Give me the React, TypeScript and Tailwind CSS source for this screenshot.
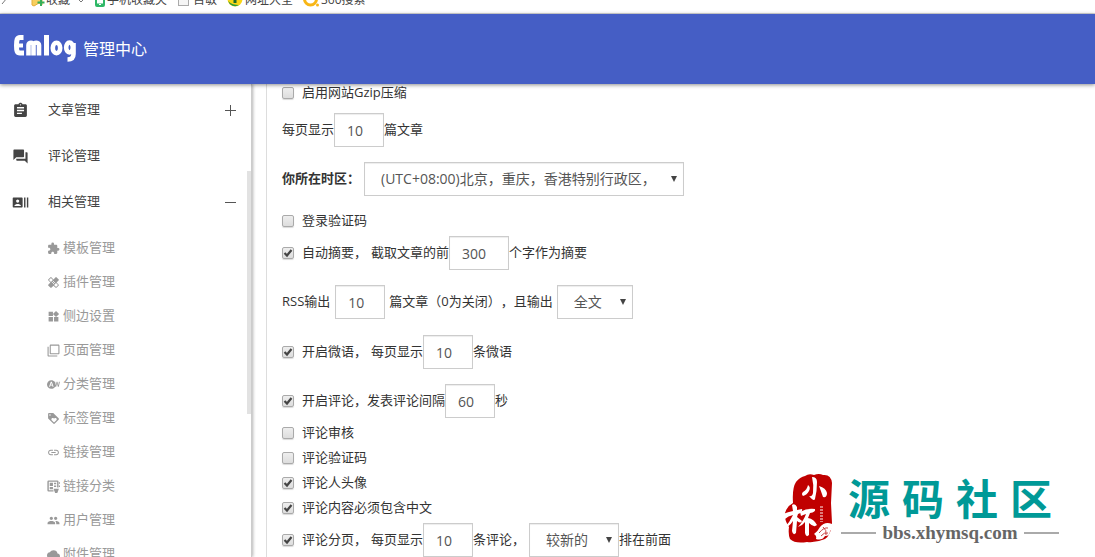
import { FC, ReactNode } from "react";
import { IconType } from "react-icons";
import {
    MdAssignment,
    MdCloud,
    MdExtension,
    MdFilterNone,
    MdHealing,
    MdLink,
    MdPeople,
    MdQuestionAnswer,
    MdRecentActors,
    MdWidgets,
} from "react-icons/md";

type IconProps = { className?: string };
type MenuItem = { label: string; icon: IconType | FC<IconProps>; sign?: "plus" | "minus" };

const LoyaltyIcon: FC<IconProps> = ({ className }) => (
    <svg viewBox="0 0 24 24" className={className} fill="currentColor" aria-hidden="true">
        <path d="M21.41 11.58l-9-9C12.05 2.22 11.55 2 11 2H4c-1.1 0-2 .9-2 2v7c0 .55.22 1.05.59 1.42l9 9c.36.36.86.58 1.41.58.55 0 1.05-.22 1.41-.59l7-7c.37-.36.59-.86.59-1.41 0-.55-.23-1.06-.59-1.42zM5.5 7C4.67 7 4 6.33 4 5.5S4.67 4 5.5 4 7 4.67 7 5.5 6.33 7 5.5 7zm11.77 8.27L13 19.54l-4.27-4.27C8.28 14.81 8 14.19 8 13.5c0-1.38 1.12-2.5 2.5-2.5.69 0 1.32.28 1.77.74l.73.72.73-.73c.45-.45 1.08-.73 1.77-.73 1.38 0 2.5 1.12 2.5 2.5 0 .69-.28 1.32-.73 1.77z" />
    </svg>
);

const AutoIcon: FC<IconProps> = ({ className }) => (
    <svg viewBox="0 0 24 24" className={className} fill="currentColor" aria-hidden="true">
        <path d="M6.85 12.65h2.3L8 9l-1.15 3.65zM22 7l-1.2 6.29L19.3 7h-1.6l-1.49 6.29L15 7h-.76C12.77 5.17 10.53 4 8 4c-4.42 0-8 3.58-8 8s3.58 8 8 8c3.13 0 5.84-1.81 7.15-4.43l.1.43H17l1.5-6.1L20 16h1.75l2.05-9H22zm-11.7 9l-.7-2H6.4l-.7 2H3.8L7 7h2l3.2 9h-1.9z" />
    </svg>
);

const BoardIcon: FC<IconProps> = ({ className }) => (
    <svg viewBox="0 0 12 12" className={className} aria-hidden="true">
        <path d="M10 7V1.500Q10 1 9.500 1H1.500Q1 1 1 1.500v8Q1 10 1.500 10H6" fill="none" stroke="currentColor" strokeWidth="1.300" />
        <path d="M2.500 2.500h3v3h-3zM6.500 2.500h2v1.500h-2zM6.500 5h2v1.500h-2zM2.500 6.500h3v2h-3zM6 8h5l-1.500 4h-2zM11 2h1v1.500h-1zM11 5h1v1.500h-1z" fill="currentColor" />
    </svg>
);

const menu: MenuItem[] = [
    { label: "文章管理", icon: MdAssignment, sign: "plus" },
    { label: "评论管理", icon: MdQuestionAnswer },
    { label: "相关管理", icon: MdRecentActors, sign: "minus" },
];

const subMenu: MenuItem[] = [
    { label: "模板管理", icon: MdExtension },
    { label: "插件管理", icon: MdHealing },
    { label: "侧边设置", icon: MdWidgets },
    { label: "页面管理", icon: MdFilterNone },
    { label: "分类管理", icon: AutoIcon },
    { label: "标签管理", icon: LoyaltyIcon },
    { label: "链接管理", icon: MdLink },
    { label: "链接分类", icon: BoardIcon },
    { label: "用户管理", icon: MdPeople },
    { label: "附件管理", icon: MdCloud },
];

const App: FC = () => (
    <div className="h-screen overflow-hidden flex flex-col bg-white text-[13px] text-[#333] [text-spacing-trim:space-all] font-['Open_Sans','Noto_Sans_CJK_SC',sans-serif]">
        <BookmarkBar />
        <Header />
        <div className="flex flex-1 min-h-0">
            <Sidebar />
            <Settings />
        </div>
        <SiteMark />
    </div>
);

const BookmarkBar: FC = () => (
    <nav className="h-[14px] shrink-0 overflow-hidden flex items-start border-b border-[#d8d8d8] text-[12px] text-[#444]">
        <div className="flex items-center h-4 -mt-2 whitespace-nowrap">
            <svg viewBox="0 0 30 16" className="w-[30px] h-4 mr-[1px]" aria-hidden="true">
                <path d="M2 12 L7 6" stroke="#777" fill="none" />
            </svg>
            <a href="#fav" className="flex items-center w-[64px]">
                <svg viewBox="0 0 14 14" className="w-[14px] h-[14px] mr-[1px]" aria-hidden="true">
                    <path d="M1 1h10v11l-3-2-5 3-2-1z" fill="#f7cf5e" stroke="#e5ae38" />
                    <path d="M10 6v7M6.500 9.500h7" stroke="#35ae58" strokeWidth="2" />
                </svg>
                收藏
                <svg viewBox="0 0 8 8" className="w-2 h-2 ml-[7px]" aria-hidden="true">
                    <path d="M1 3l3 3 3-3" fill="none" stroke="#777" />
                </svg>
            </a>
            <a href="#mobile" className="flex items-center w-[83px]">
                <svg viewBox="0 0 10 14" className="w-[10px] h-[14px] mr-[2px]" aria-hidden="true">
                    <rect x="1" y="1" width="8" height="12" rx="1" fill="#fff" stroke="#2fb867" strokeWidth="2" />
                    <path d="M1 11.500h8" stroke="#2fb867" strokeWidth="2" />
                    <path d="M4 11.500h2" stroke="#fff" />
                </svg>
                手机收藏夹
            </a>
            <a href="#baimin" className="flex items-center w-[49px]">
                <svg viewBox="0 0 12 14" className="w-3 h-[14px] mr-[3px]" aria-hidden="true">
                    <rect x=".5" y=".5" width="10" height="12" fill="#f5f5f5" stroke="#aaa" />
                </svg>
                百敏
            </a>
            <a href="#sites" className="flex items-center w-[76px]">
                <svg viewBox="0 0 16 16" className="w-4 h-4 mr-[2px]" aria-hidden="true">
                    <circle cx="8" cy="7" r="7.500" fill="#f9d616" />
                    <path d="M1 9a7.500 7.500 0 0 0 11 4c-4 0-8-1-11-4z" fill="#27983f" />
                    <path d="M8 5v6" stroke="#1d6b2b" strokeWidth="3" />
                </svg>
                网址大全
            </a>
            <a href="#search" className="flex items-center">
                <svg viewBox="0 0 16 16" className="w-4 h-4 mr-[2px]" aria-hidden="true">
                    <circle cx="7.500" cy="7" r="6" fill="none" stroke="#f8b616" strokeWidth="3" />
                    <circle cx="14.500" cy="13" r="1.500" fill="#f8b616" />
                </svg>
                360搜索
            </a>
        </div>
    </nav>
);

const Header: FC = () => (
    <header className="h-[70px] shrink-0 relative z-10 flex items-center px-3 bg-[#455ec5] text-white shadow-[0_1px_4px_rgba(0,0,0,0.45)]">
        <a href="#home" className="flex items-center">
            <svg viewBox="0 0 64 28" className="w-16 h-7 mr-[7px]" role="img" aria-label="Emlog">
                <g fill="none" stroke="#fff">
                    <path d="M11.500 2.500H8C5 2.500 4.500 5 4.500 10.500S5 18 8 18h4" strokeWidth="5" />
                    <path d="M5 10.500h6" strokeWidth="4" />
                    <path d="M16.500 20.500V10c0-3 5-3 5 0v10.500M21.500 20.500V10c0-3 5.500-3 5.500 0v10.500" strokeWidth="4.600" />
                    <path d="M34.500 0v20.500" strokeWidth="5" />
                    <ellipse cx="44.500" cy="13" rx="3.700" ry="5.200" strokeWidth="4.600" />
                    <ellipse cx="57.500" cy="12.500" rx="3.300" ry="5" strokeWidth="4.600" />
                    <path d="M61.500 8v11c0 4-2 5.500-6 5.500" strokeWidth="4.600" />
                </g>
            </svg>
            <span className="text-base">管理中心</span>
        </a>
    </header>
);

const Sidebar: FC = () => (
    <aside className="w-[252px] shrink-0 relative overflow-hidden border-r border-[#ccc] shadow-[1px_0_3px_rgba(0,0,0,0.3)] pt-[3px]">
        {menu.map(({ label, icon: Icon, sign }) => (
            <a key={label} href={`#${label}`} className="h-[46px] flex items-center pl-3 pr-[15px] text-[#444]">
                <Icon className="size-[17px] mr-[19px]" />
                <span className="flex-1">{label}</span>
                {sign && <Sign type={sign} />}
            </a>
        ))}
        <div className="pt-[6px]">
            {subMenu.map(({ label, icon: Icon }) => (
                <a key={label} href={`#${label}`} className="h-[34px] flex items-center pl-[47px] text-[#999]">
                    <Icon className="size-[13px] mr-[3px]" />
                    {label}
                </a>
            ))}
        </div>
        <div className="absolute right-0 top-[87px] w-1 h-[243px] bg-[#e2e2e2]" />
    </aside>
);

const Sign: FC<{ type: "plus" | "minus" }> = ({ type }) => (
    <svg viewBox="0 0 11 11" className="size-[11px]" aria-hidden="true">
        <path d={type === "plus" ? "M0 5.500h11M5.500 0v11" : "M0 5.500h11"} stroke="#555" />
    </svg>
);

const Settings: FC = () => (
    <form className="flex-1 min-w-0 ml-[14px] pl-[15px] border-l border-[#ddd] overflow-hidden whitespace-nowrap">
        <div className="h-[17px] mb-3 flex items-center">
            <Check label="启用网站Gzip压缩" />
        </div>
        <Row>
            每页显示<Field label="每页显示文章数" value="10" />篇文章
        </Row>
        <Row>
            <label htmlFor="timezone" className="font-bold mr-1">你所在时区：</label>
            <Select id="timezone" label="你所在时区" className="w-[320px]" option="(UTC+08:00)北京，重庆，香港特别行政区，乌鲁木齐" />
        </Row>
        <div className="h-[25px] -mt-[3px] mb-[3px] flex items-center">
            <Check label="登录验证码" />
        </div>
        <Row>
            <Check label="自动摘要，" checked />
            <span className="ml-1">截取文章的前</span>
            <Field label="截取字数" value="300" wide />个字作为摘要
        </Row>
        <div className="pb-px">
            <Row>
                RSS输出
                <span className="ml-[5px] mr-1 flex"><Field label="RSS输出篇数" value="10" /></span>
                篇文章（0为关闭），且输出
                <span className="ml-1 flex"><Select label="输出方式" className="w-[76px]" option="全文" /></span>
            </Row>
        </div>
        <Row>
            <Check label="开启微语，" checked />
            <span className="ml-1">每页显示</span>
            <Field label="每页微语数" value="10" />条微语
        </Row>
        <Row>
            <Check label="开启评论，" checked />
            发表评论间隔<Field label="评论间隔秒数" value="60" />秒
        </Row>
        <div className="-mt-[13px] mb-[3px]">
            <div className="h-[25px] flex items-center"><Check label="评论审核" /></div>
            <div className="h-[25px] flex items-center"><Check label="评论验证码" /></div>
            <div className="h-[25px] flex items-center"><Check label="评论人头像" checked /></div>
            <div className="h-[25px] flex items-center"><Check label="评论内容必须包含中文" checked /></div>
        </div>
        <Row>
            <Check label="评论分页，" checked />
            <span className="ml-1">每页显示</span>
            <Field label="每页评论数" value="10" />
            条评论，
            <span className="ml-1 flex"><Select label="评论排序" className="w-[90px]" option="较新的" /></span>
            排在前面
        </Row>
    </form>
);

const Row: FC<{ children: ReactNode }> = ({ children }) => (
    <div className="h-[34px] mb-[15px] flex items-center">{children}</div>
);

const Check: FC<{ label: string; checked?: boolean }> = ({ label, checked }) => (
    <label className="flex items-center">
        <span className="relative flex mr-2">
            <input
                type="checkbox"
                defaultChecked={checked}
                className="peer appearance-none size-3 rounded-[2px] border border-[#aaa] bg-linear-to-b from-[#eee] to-[#ddd] shadow-[0_1px_1px_rgba(0,0,0,0.15)]"
            />
            <svg viewBox="0 0 12 12" className="absolute inset-0 size-3 hidden peer-checked:block pointer-events-none" aria-hidden="true">
                <path d="M2.500 6l2.500 2.500L9.500 3" fill="none" stroke="#444" strokeWidth="2.200" />
            </svg>
        </span>
        {label}
    </label>
);

const Field: FC<{ label: string; value: string; wide?: boolean }> = ({ label, value, wide }) => (
    <input
        type="text"
        aria-label={label}
        defaultValue={value}
        className={`${wide ? "w-[60px]" : "w-[50px]"} h-[34px] px-3 border border-[#ccc] text-sm text-[#555] shadow-[inset_0_1px_1px_rgba(0,0,0,0.075)]`}
    />
);

const Select: FC<{ id?: string; label: string; option: string; className: string }> = ({ id, label, option, className }) => (
    <span className={`relative flex ${className}`}>
        <select
            id={id}
            aria-label={label}
            className="appearance-none w-full h-[34px] pl-4 pr-[30px] border border-[#ccc] text-sm text-[#555] [text-spacing-trim:space-all] shadow-[inset_0_1px_1px_rgba(0,0,0,0.075)]"
        >
            <option>{option}</option>
        </select>
        <svg viewBox="0 0 6 6" className="absolute right-[7px] top-[14px] size-[6px] pointer-events-none" aria-hidden="true">
            <path d="M0 0h6L3 6z" fill="#444" />
        </svg>
    </span>
);

const SiteMark: FC = () => (
    <div className="absolute right-[36px] bottom-3 z-20 flex items-center">
        <svg viewBox="0 0 50 72" className="w-[50px] h-[72px] mr-[8px]" aria-hidden="true">
            <path d="M13 9Q17 4 22 3Q26 0 31 2Q36 0 40 2Q48 1 49 10L48 30L49 50Q48 62 42 66Q33 70 24 69Q12 71 7 66Q5 61 6 54Q1 47 2 40Q4 33 10 30Q9 15 13 9Z" fill="#c00000" />
            <g fill="#fff">
                <path d="M29 4Q34 4 34 9Q34 18 32 26Q31 29 26 23Q29 24 30 20Q31 12 29 4Z" />
                <path d="M25 12Q28 14 26 18Q24 22 20 23Q18 21 20 19Q24 17 25 12Z" />
                <path d="M36 13Q43 15 44 20Q44 25 40 24Q38 18 36 13Z" />
                <path d="M0 41Q5 39 10 38L9 32Q12 30 14 34L14 37L19 36Q20 39 15 41L14 44L19 48Q18 51 14 48L13 60Q10 63 9 58L10 48Q6 54 1 55Q7 49 10 42Q5 43 2 46Z" />
                <path d="M17 39Q24 35 32 36Q33 39 27 40L25 45Q31 46 34 52Q31 55 26 50L26 62Q23 65 22 60L22 49Q19 53 15 54Q21 47 23 41Q20 42 18 43Z" />
                <path d="M31 61Q35 58 37 54Q42 48 49 51Q50 56 47 58Q47 63 42 63Q39 68 33 66Q34 63 31 61Z" />
            </g>
            <path d="M36 60Q41 54 45 55M38 63Q41 59 45 60M40 54Q44 57 43 62" fill="none" stroke="#c94444" />
            <path d="M38.500 33v16" stroke="#e07b7b" strokeWidth="3" strokeDasharray="2 1" />
        </svg>
        <div className="w-[218px]">
            <div className="flex justify-between px-[7px] text-[42px] leading-[48px] font-bold text-[#009997]">
                <span>源</span>
                <span>码</span>
                <span>社</span>
                <span>区</span>
            </div>
            <div className="flex items-center gap-[6px] font-['Liberation_Serif',serif] font-bold text-[19px] leading-5 text-[#666]">
                <span className="flex-1 h-[2px] bg-[#aaa]" />
                <a href="http://bbs.xhymsq.com">bbs.xhymsq.com</a>
                <span className="flex-1 h-[2px] bg-[#aaa]" />
            </div>
        </div>
    </div>
);

export default App;
